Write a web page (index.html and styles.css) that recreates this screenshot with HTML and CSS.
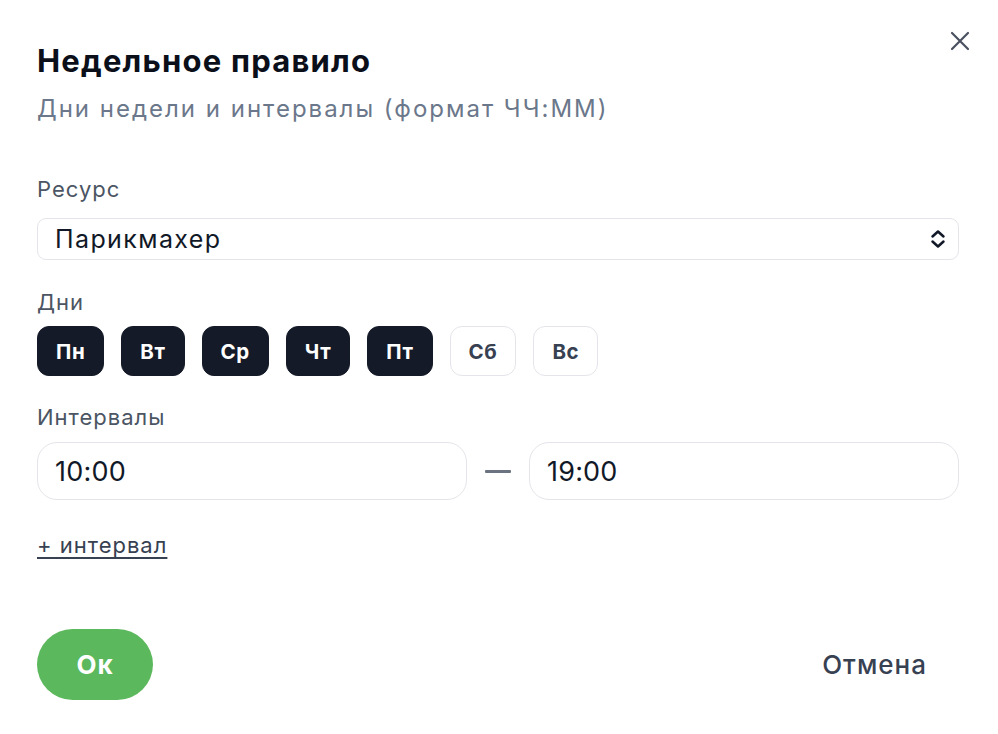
FILE: index.html
```html
<!DOCTYPE html>
<html lang="ru">
<head>
<meta charset="utf-8">
<link rel="stylesheet" href="styles.css">
</head>
<body>
<div class="dialog">
  <button class="close" aria-label="Закрыть">
    <svg width="20" height="20" viewBox="0 0 20 20"><path d="M2 2L18 18M18 2L2 18" stroke="#4b5060" stroke-width="2.2" stroke-linecap="round"/></svg>
  </button>
  <h1 class="title">Недельное правило</h1>
  <p class="subtitle">Дни недели и интервалы (формат ЧЧ:ММ)</p>

  <div class="field field-resource">
    <div class="label">Ресурс</div>
    <div class="select">
      <span>Парикмахер</span>
      <svg width="18" height="22" viewBox="0 0 18 22"><path d="M3.5 8.5L9 3.5L14.5 8.5M3.5 13.5L9 18.5L14.5 13.5" fill="none" stroke="#111827" stroke-width="2.5" stroke-linecap="round" stroke-linejoin="round"/></svg>
    </div>
  </div>

  <div class="field field-days">
    <div class="label">Дни</div>
    <div class="days">
      <span class="day on">Пн</span>
      <span class="day on">Вт</span>
      <span class="day on">Ср</span>
      <span class="day on">Чт</span>
      <span class="day on">Пт</span>
      <span class="day">Сб</span>
      <span class="day">Вс</span>
    </div>
  </div>

  <div class="field field-intervals">
    <div class="label">Интервалы</div>
    <div class="intervals">
      <div class="time">10:00</div>
      <span class="dash"></span>
      <div class="time">19:00</div>
    </div>
  </div>

  <a class="add">+ интервал</a>

  <div class="actions">
    <button class="ok">Ок</button>
    <button class="cancel">Отмена</button>
  </div>
</div>
</body>
</html>
```

FILE: styles.css
```css
* { box-sizing: border-box; }
html, body { margin: 0; background: #fff; }
body { font-family: Inter, "Noto Sans", sans-serif; color: #111827; }
.dialog { position: relative; padding: 43px 39px 0 37px; }
.close { position: absolute; top: 31px; right: 28px; background: none; border: 0; padding: 0; width: 20px; height: 20px; }
.title { margin: 0; font-size: 31px; line-height: 36px; font-weight: 700; letter-spacing: 1.2px; color: #0b0f1a; }
.subtitle { margin: 16px 0 0; font-size: 24px; line-height: 28px; letter-spacing: 2px; color: #6b778a; }
.label { font-size: 22px; line-height: 24px; letter-spacing: 1px; color: #4b5563; }
.field-resource { margin-top: 54px; }
.field-resource .label { margin-bottom: 17px; }
.field-days { margin-top: 30px; }
.field-days .label { margin-bottom: 12px; }
.field-intervals { margin-top: 29px; }
.field-intervals .label { margin-bottom: 13px; }
.select { height: 42px; border: 1.5px solid #e4e5ea; border-radius: 9px; display: flex; align-items: center; justify-content: space-between; padding: 0 11px 0 17px; font-size: 25px; letter-spacing: 1.4px; color: #111827; }
.days { display: flex; gap: 17px; }
.day { height: 50px; padding: 0 18px; border-radius: 12px; display: flex; align-items: center; font-size: 20.5px; letter-spacing: 0.6px; font-weight: 700; border: 1.5px solid #e4e5ea; color: #374151; }
.day.on { background: #141a27; border-color: #141a27; color: #fff; }
.intervals { display: flex; align-items: center; gap: 18px; }
.time { flex: 1; height: 58px; border: 1.5px solid #e4e5ea; border-radius: 20px; display: flex; align-items: center; padding: 0 17px; font-size: 27px; letter-spacing: 0.2px; color: #111827; }
.dash { width: 26px; height: 3px; background: #6b7280; border-radius: 1px; }
.add { display: inline-block; margin-top: 33px; font-size: 22px; line-height: 24px; letter-spacing: 1px; color: #374151; text-decoration: underline; text-underline-offset: 4px; text-decoration-thickness: 1.5px; }
.actions { margin-top: 72px; display: flex; justify-content: space-between; align-items: center; }
.ok { width: 116px; height: 71px; border: 0; border-radius: 36px; background: #5cb85c; color: #fff; font-family: inherit; font-size: 26px; letter-spacing: 1px; font-weight: 700; }
.cancel { background: none; border: 0; padding: 0; margin-right: 32px; font-family: inherit; font-size: 26px; letter-spacing: 1px; font-weight: 500; color: #374151; }
```
